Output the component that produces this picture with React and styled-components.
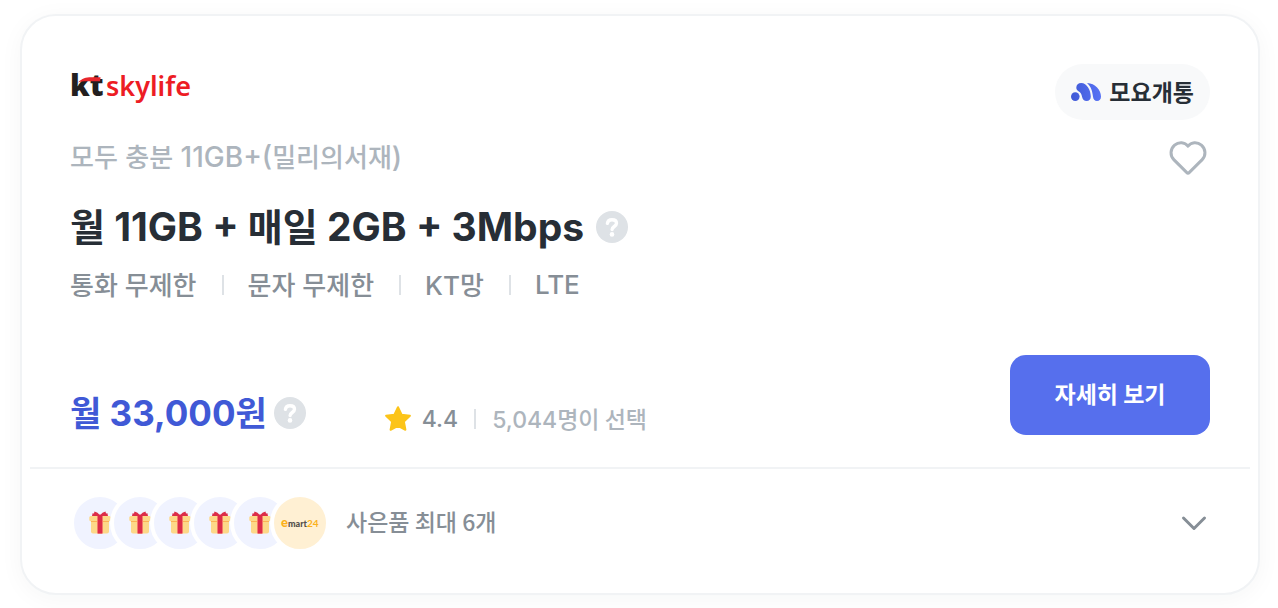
import React from "react";
import styled, { createGlobalStyle } from "styled-components";

const Global = createGlobalStyle`
  * { box-sizing: border-box; }
  body {
    margin: 0;
    padding: 14px 18px 13px 20px;
    background: #fff;
    font-family: Inter, "Noto Sans CJK KR", sans-serif;
  }
  h2, p, ul { margin: 0; padding: 0; }
  button { font-family: inherit; border: 0; padding: 0; background: none; cursor: pointer; }
`;

const Card = styled.article`
  border: 2px solid #f1f3f5;
  border-radius: 36px;
  background: #fff;
  box-shadow: 0 4px 24px rgba(20, 60, 40, 0.04);
`;

const Summary = styled.div`
  padding: 48px 48px 32px;
`;

const Top = styled.div`
  display: flex;
  justify-content: space-between;
`;

const Plan = styled.div`
  display: flex;
  flex-direction: column;
  align-items: flex-start;
`;

const Logo = styled.svg`
  display: block;
  width: 124px;
  height: 44px;
`;

const Ko = styled.span`
  font-family: "Noto Sans CJK KR", sans-serif;
  font-size: ${(p) => p.$size}px;
`;

const Name = styled.p`
  margin-top: 28px;
  height: 40px;
  line-height: 40px;
  font-size: 28px;
  font-weight: 500;
  color: #adb5bd;
`;

const TitleRow = styled.div`
  display: flex;
  align-items: center;
  gap: 12px;
  margin-top: 23px;
  height: 56px;
`;

const Title = styled.h2`
  padding-bottom: 2px;
  line-height: 56px;
  font-size: 39px;
  font-weight: 700;
  color: #272e36;
`;

const Specs = styled.ul`
  display: flex;
  align-items: center;
  margin-top: 8px;
  height: 44px;
  line-height: 44px;
  list-style: none;
  font-size: 26px;
  font-weight: 500;
  color: #868e96;
`;

const Spec = styled.li`
  display: flex;
  align-items: center;
  & + &::before {
    content: "";
    width: 2px;
    height: 20px;
    margin: 0 24px 0 25px;
    background: #dee2e6;
  }
`;

const Help = styled.button`
  display: block;
  width: 32px;
  height: 32px;
  svg { display: block; }
`;

const Actions = styled.div`
  display: flex;
  flex-direction: column;
  align-items: flex-end;
  gap: 16px;
`;

const Badge = styled.div`
  display: flex;
  align-items: center;
  gap: 8px;
  height: 56px;
  padding: 0 16px;
  border-radius: 28px;
  background: #f8f9fa;
`;

const BadgeText = styled.span`
  padding-bottom: 2px;
  color: #272e36;
  font-weight: 700;
`;

const Like = styled.button`
  display: block;
  width: 44px;
  height: 44px;
  svg { display: block; }
`;

const Bottom = styled.div`
  display: flex;
  justify-content: space-between;
  align-items: flex-end;
  margin-top: 48px;
`;

const Figures = styled.div`
  display: flex;
  align-items: center;
  height: 44px;
`;

const Price = styled.strong`
  margin-right: 7px;
  padding-bottom: 2px;
  line-height: 44px;
  font-size: 35px;
  font-weight: 700;
  color: #4059d6;
`;

const Rating = styled.div`
  display: flex;
  align-items: center;
  align-self: flex-end;
  height: 32px;
  margin-left: 77px;
  line-height: 32px;
  font-size: 23px;
  font-weight: 500;
  color: #868e96;
  svg { display: block; margin-right: 9px; }
`;

const Chosen = styled.span`
  display: flex;
  align-items: center;
  color: #adb5bd;
  &::before {
    content: "";
    width: 2px;
    height: 20px;
    margin: 0 16px;
    background: #dee2e6;
  }
`;

const Detail = styled.button`
  width: 200px;
  height: 80px;
  padding-bottom: 4px;
  border-radius: 16px;
  background: #566fed;
  color: #fff;
  font-weight: 700;
`;

const Gifts = styled.button`
  display: flex;
  align-items: center;
  width: calc(100% - 16px);
  margin: 0 8px;
  padding: 24px 40px 40px;
  border-top: 2px solid #f1f3f5;
  text-align: left;
  color: #868e96;
  font-weight: 500;
`;

const Stack = styled.span`
  display: flex;
  margin-right: 16px;
`;

const Disc = styled.span`
  display: flex;
  align-items: center;
  justify-content: center;
  width: 60px;
  height: 60px;
  border: 4px solid #fff;
  border-radius: 50%;
  background: ${(p) => p.$tint};
  & + & { margin-left: -20px; }
`;

const GiftText = styled.span`
  flex: 1;
  padding-bottom: 4px;
`;

function HelpIcon() {
  return (
    <svg width="32" height="32" viewBox="0 0 32 32" fill="none" aria-hidden="true">
      <circle cx="16" cy="16" r="16" fill="#dee2e6" />
      <path d="M11.400 12.400c.3-2.400 2.100-3.700 4.600-3.700 2.700 0 4.500 1.400 4.500 3.600 0 3.200-4.400 3.200-4.400 6.200" stroke="#fff" strokeWidth="3.400" strokeLinecap="round" strokeLinejoin="round" />
      <circle cx="16" cy="23.400" r="2.300" fill="#fff" />
    </svg>
  );
}

function GiftIcon() {
  return (
    <svg width="22" height="24" viewBox="0 0 22 24" aria-hidden="true">
      <path d="M2 9h18v11.500a2 2 0 0 1-2 2H4a2 2 0 0 1-2-2z" fill="#fdd888" />
      <rect x="0.300" y="5" width="21.400" height="5.300" rx="1.500" fill="#fdd888" />
      <path d="M2 10h18v1H2z" fill="#fbb254" />
      <path d="M8 5h6v17.500H8z" fill="#f27b6b" />
      <path d="M9 4h4v18.500H9z" fill="#dc2c48" />
      <path d="M3 5 3.600 2.300 5 2.500 5.500.500 8.500 1.800 10.200 3.500h1.600L13.500 1.800 16.500.500 17 2.500 18.400 2.300 19 5z" fill="#dc2c48" />
    </svg>
  );
}

export default function App() {
  return (
    <>
      <Global />
      <Card>
        <Summary>
          <Top>
            <Plan>
              <Logo viewBox="0 0 124 44" role="img" aria-label="kt skylife">
                <text x="0" y="32" fontFamily="Open Sans, sans-serif" fontSize="30" fontWeight="800" fill="#231f20">kt</text>
                <path d="M8 18.500C12 14.500 16 13.300 21 13.300h9.600L30 17.300h-9.500c-5 0-8.500-.300-12.500 1.200z" fill="#e8262c" />
                <text x="36" y="32" fontFamily="Noto Sans, sans-serif" fontSize="27" fontWeight="600" fill="#ed1c24">skylife</text>
              </Logo>
              <Name>
                <Ko $size={26}>모두</Ko> <Ko $size={26}>충분</Ko> 11GB+(<Ko $size={26}>밀리의서재</Ko>)
              </Name>
              <TitleRow>
                <Title>
                  <Ko $size={38}>월</Ko> 11GB + <Ko $size={38}>매일</Ko> 2GB + 3Mbps
                </Title>
                <Help type="button" aria-label="데이터 안내"><HelpIcon /></Help>
              </TitleRow>
              <Specs>
                <Spec><span><Ko $size={26}>통화</Ko> <Ko $size={26}>무제한</Ko></span></Spec>
                <Spec><span><Ko $size={26}>문자</Ko> <Ko $size={26}>무제한</Ko></span></Spec>
                <Spec><span>KT<Ko $size={26}>망</Ko></span></Spec>
                <Spec><span>LTE</span></Spec>
              </Specs>
            </Plan>
            <Actions>
              <Badge>
                <svg width="30" height="18" viewBox="0 0 30 18" aria-hidden="true">
                  <defs>
                    <linearGradient id="moyo" gradientUnits="userSpaceOnUse" x1="0" y1="0" x2="30" y2="0">
                      <stop offset="0" stopColor="#4059d6" />
                      <stop offset="1" stopColor="#5873f5" />
                    </linearGradient>
                  </defs>
                  <g fill="url(#moyo)">
                    <circle cx="4.300" cy="13.600" r="4.300" />
                    <path d="M5.300 4.700C5.300 2 7.300 0 10.200 0 16 0 19.800 7.500 19.800 13.400c0 2.800-1.600 4.600-4.200 4.600-2.400 0-3.900-1.400-4.500-4C10.500 11 9.800 9.500 7.500 8.200 6.200 7.400 5.300 6.300 5.300 4.700z" />
                    <path d="M16 0c8.400.300 14 7 14 13.500 0 2.800-1.500 4.500-4 4.500-2.400 0-3.700-1.500-4-4.200C21.400 8.500 20.200 3.500 16 0z" />
                  </g>
                </svg>
                <BadgeText><Ko $size={23}>모요개통</Ko></BadgeText>
              </Badge>
              <Like type="button" aria-label="찜하기">
                <svg width="44" height="44" viewBox="0 0 44 44" fill="none" aria-hidden="true">
                  <path d="M22 10.200C18.800 6 12.700 5.600 8.600 9.200c-4.500 4-4.700 10.400-.8 14.400L20.600 36.400c.8.800 2 .8 2.800 0L36.200 23.600c3.900-4 3.700-10.400-.8-14.400C31.300 5.600 25.200 6 22 10.200z" stroke="#adb5bd" strokeWidth="3" strokeLinejoin="round" />
                </svg>
              </Like>
            </Actions>
          </Top>
          <Bottom>
            <Figures>
              <Price><Ko $size={34}>월</Ko> 33,000<Ko $size={34}>원</Ko></Price>
              <Help type="button" aria-label="요금 안내"><HelpIcon /></Help>
              <Rating>
                <svg width="30" height="30" viewBox="0 0 30 30" aria-hidden="true">
                  <path d="M15 3.200 18.600 10.700 26.900 11.800 20.900 17.600 22.400 25.800 15 21.900 7.600 25.800 9.100 17.600 3.100 11.800 11.400 10.700z" fill="#fcc419" stroke="#fcc419" strokeWidth="2" strokeLinejoin="round" />
                </svg>
                4.4
                <Chosen><span>5,044<Ko $size={23}>명이 선택</Ko></span></Chosen>
              </Rating>
            </Figures>
            <Detail type="button"><Ko $size={23}>자세히 보기</Ko></Detail>
          </Bottom>
        </Summary>
        <Gifts type="button" aria-expanded="false">
          <Stack>
            {[0, 1, 2, 3, 4].map((n) => (
              <Disc key={n} $tint="#f0f3ff"><GiftIcon /></Disc>
            ))}
            <Disc $tint="#fff0d3">
              <svg width="44" height="20" viewBox="0 0 44 20" role="img" aria-label="emart24">
                <text y="14" fontFamily="Lato, sans-serif" fontWeight="900">
                  <tspan x="3" fontSize="13" fill="#fbb11b">e</tspan>
                  <tspan x="10" fontSize="9" fill="#55504c">mart</tspan>
                  <tspan x="29" fontSize="10" fontWeight="700" fill="#fbb11b">24</tspan>
                </text>
              </svg>
            </Disc>
          </Stack>
          <GiftText>
            <Ko $size={23}>사은품 최대 6개</Ko>
          </GiftText>
          <svg width="32" height="32" viewBox="0 0 32 32" fill="none" aria-hidden="true">
            <path d="M5.500 11 16 21.500 26.500 11" stroke="#868e96" strokeWidth="3" strokeLinecap="round" strokeLinejoin="round" />
          </svg>
        </Gifts>
      </Card>
    </>
  );
}
